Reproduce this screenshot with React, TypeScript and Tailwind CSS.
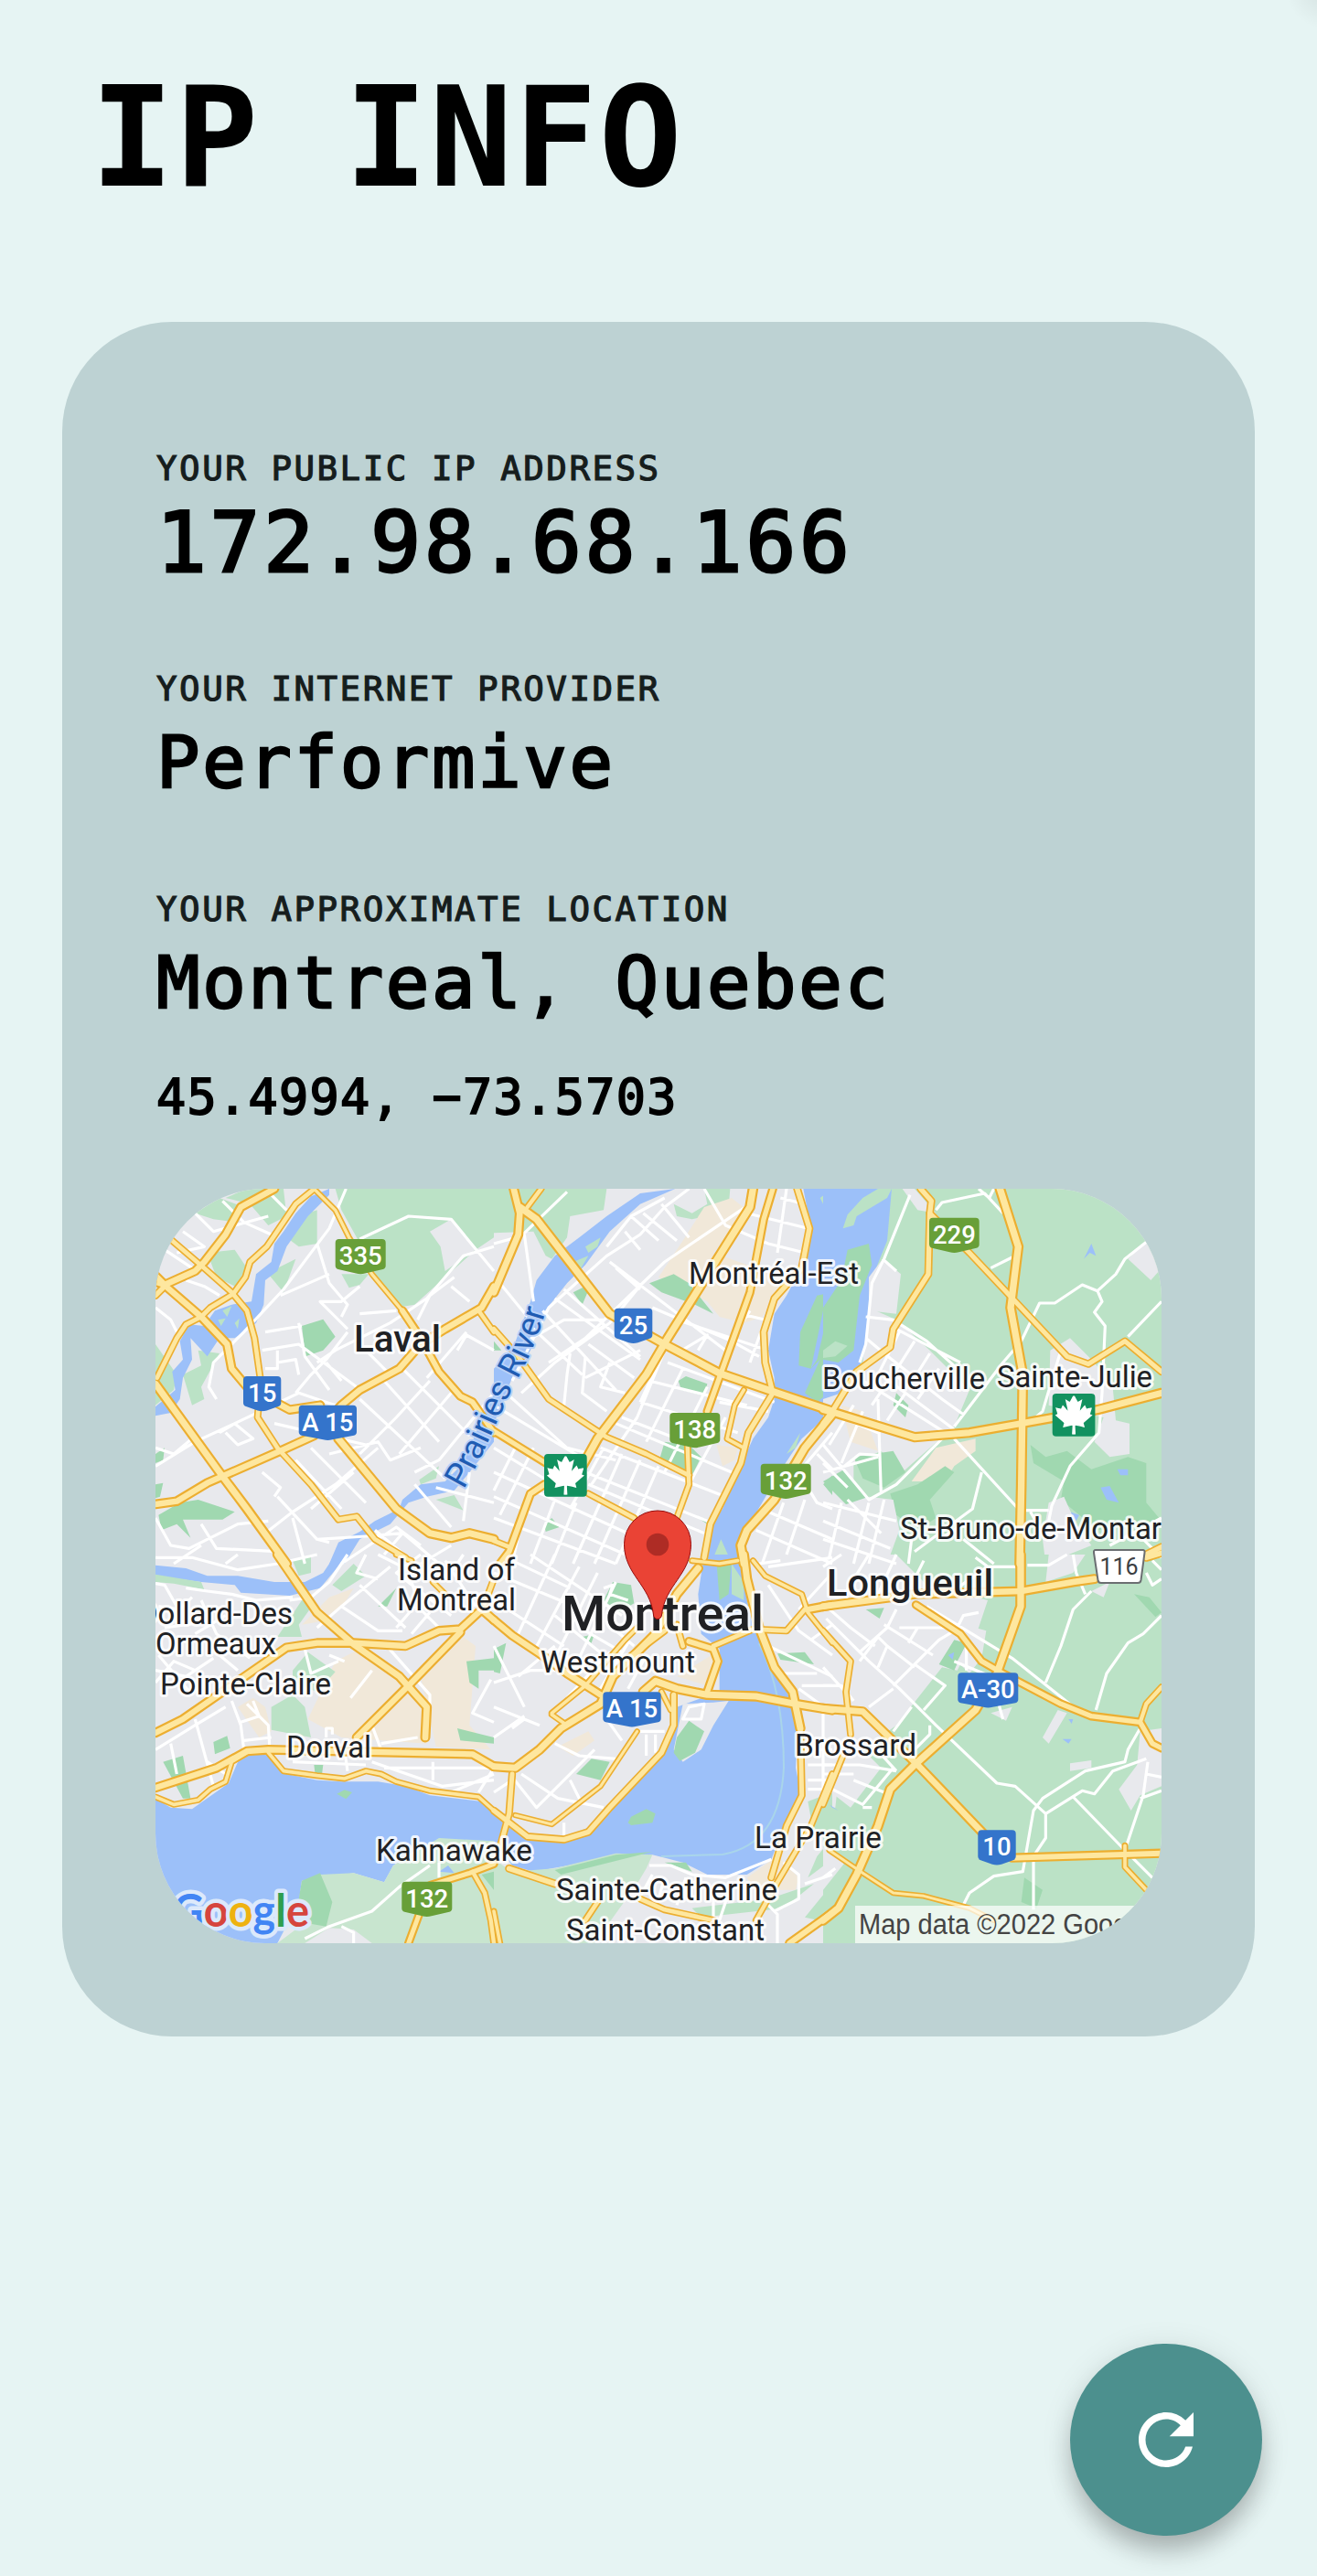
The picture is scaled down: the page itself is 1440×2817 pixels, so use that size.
import React from "react";
import { MdRefresh } from "react-icons/md";
import { FaCanadianMapleLeaf } from "react-icons/fa";

const LAND = "#e8e9ed";
const GREEN = "#bbe2c6";
const PALE = "#c8e5cf";
const DARK = "#a0d8b0";
const WATER = "#9cc0f9";
const SAND = "#f1e8d9";

type Sector = {
  x: number;
  y: number;
  areas: [string, string][];
  streets: string;
  roads: [number, string][];
};

/* Each sector is drawn at three times the map's scale. */
const sectors: Sector[] = [
  {
    x: 160,
    y: 1290,
    areas: [
      [GREEN, "M620 30H1140V190L1080 230L880 410L820 420L740 300L690 190L640 100Z"],
      [LAND, "M930 170L1000 130L1080 230L980 300L965 220Z"],
      [GREEN, "M640 310H730L700 345L665 355Z"],
      [GREEN, "M260 60L330 30H450L460 120L400 150L340 80Z"],
      [GREEN, "M160 110L240 60L320 90L300 140L220 130Z"],
      [GREEN, "M500 120L560 100V210L500 220L460 190Z"],
      [GREEN, "M200 240L290 230L330 290L290 350L230 320Z"],
      [GREEN, "M430 290L490 260L450 370L400 310Z"],
      [GREEN, "M30 540L100 640L90 690L30 740Z"],
      [GREEN, "M120 640L180 610L170 560L240 570L180 680L190 720L150 740Z"],
      [WATER, "M600 30L540 55L490 110L450 170L420 210L410 270L360 310L345 400L280 410L225 430L190 480L140 475L110 530L120 590L85 630L95 690L30 745V775L80 765L110 720L120 650L150 590L145 520L200 580L240 520L290 520L360 470L385 410L390 330L430 300L460 220L530 120L600 50Z"],
      [GREEN, "M250 430L280 415L265 450ZM235 460L260 455L245 480ZM290 470L305 455L300 490Z"],
      [DARK, "M510 480L580 458L620 515L580 560L522 580Z"],
      [DARK, "M40 1100L110 1060L170 1050L290 1090L250 1115L120 1115L145 1175L100 1130L50 1150Z"],
      [DARK, "M30 1000L55 995L45 1040L30 1045ZM30 900L60 880L55 920L30 930Z"],
      [WATER, "M1140 690L1040 930L980 990L900 1000L840 1050L830 1080L750 1120L700 1155L630 1190L600 1260H650L700 1180L800 1130L860 1060L920 1040L1010 1020L1060 960L1140 860Z"],
      [GREEN, "M895 985L960 940L950 980L900 1000ZM950 1050L1010 1035L1040 1085Z"],
    ],
    streets:
      "M655 30L600 160L570 200L450 360L320 500L220 600L205 680L230 720M700 195L860 120L1000 130L1140 300M1140 220L1040 250L920 390L800 470L620 560L560 600M440 380L600 310M560 210L600 340L660 410L640 450M700 350L640 400L570 400L620 450L660 490M500 470L520 580L600 690M390 500L510 480M380 560L500 540L690 680M30 940L160 860L290 800L500 700L620 740M590 600L640 660M660 500L590 590L540 640L490 700M700 720L980 980M780 660L960 860M840 620L1060 840M930 660L820 780L700 900M1000 700L830 900M1050 500L920 650M720 560L800 640M540 880L720 1060M490 920L640 1080M760 880L620 1000L480 1090L390 1160M680 960L540 1080M30 1110L80 1200L140 1210L300 1130L400 1120M180 1130L230 1210L430 1220M430 1040L560 1180L600 1190M1060 960L1040 1120M950 1010L1140 1060M880 1000L1000 1140M880 960L960 920L1140 700M250 70L320 140L410 180M160 110L220 170L400 120M120 170L190 220L100 240M60 230L150 290M410 50L460 100M30 420L80 460L100 500M130 330L190 350L240 380M430 560V620L390 620M430 600L490 590L500 640M30 880L90 900L150 850M240 830L290 800L350 850L300 870L260 830M420 800L720 870M600 900L760 860L800 920L900 880M380 960L440 1010L420 1040M480 1110L520 1260M300 1230L260 1260M90 1260L180 1200M560 1180L720 1170L840 1160L780 1230M1000 350L1060 400M890 460L930 380L1010 320M1140 560L1050 510L1020 560M700 440L820 430M640 1260L820 1140L900 1200M750 1150L880 1260M830 1150L960 1260M1000 1200L900 1260",
    roads: [
      [31, "M30 335L60 345L160 300L190 270L260 180L310 90L420 30"],
      [31, "M30 315L70 355L180 450L265 540L280 620L330 680L470 755L570 740"],
      [23, "M85 200L190 290L280 370L330 430L355 520L375 660L365 780L430 880L540 1000L630 1115L690 1105L750 1180L850 1240"],
      [23, "M545 35L490 80L395 220L340 270L325 320L285 375L210 420L180 450L130 475L100 520L35 650"],
      [25, "M30 380L60 350"],
      [33, "M30 670L240 960L330 1080L460 1260"],
      [31, "M30 1065L100 1055L200 995L440 890L550 840L640 740L700 690L830 620L900 540L980 490L1100 420L1140 350"],
      [19, "M550 30L620 100L665 190L740 310L840 430"],
      [29, "M840 430L900 520L960 630L1030 710L1070 730L1140 830"],
      [33, "M630 850L820 1080L930 1160L1000 1175L1060 1160L1140 1180"],
      [22, "M1090 430L1140 500"],
    ],
  },
  {
    x: 540,
    y: 1290,
    areas: [
      [GREEN, "M0 30H370L360 100L250 120L240 190L190 260L170 250L130 170L0 175Z"],
      [GREEN, "M690 30H775L770 90L740 110L650 130L600 120L590 80L650 110L700 80Z"],
      [SAND, "M690 90L780 60L830 100L720 240L860 290L960 330L900 420L880 450L820 470L740 450L700 400L540 320L620 200Z"],
      [SAND, "M730 870L800 880L790 920L750 940Z"],
      [DARK, "M510 340L590 310L640 340L720 440L660 410L550 370Z"],
      [WATER, "M595 30L480 45L370 120L280 190L200 250L140 330L120 400L60 560L0 620V800L60 650L120 560L160 440L240 340L300 280L380 170L480 80Z"],
      [GREEN, "M300 220L350 190L340 220L310 240ZM260 270L310 250L280 300Z"],
      [DARK, "M260 370L320 340L290 410ZM0 530L25 560L0 560Z"],
      [WATER, "M1015 30L1040 160L1030 250L960 380L920 440L900 560L920 650V720L900 780L850 850L800 960L750 1080L710 1140L700 1260H790L820 1160L880 1060L950 940L1010 850L1110 760V30Z"],
      [DARK, "M1060 380L1110 370V690L1060 730L1020 700L1070 590L1040 620L1000 610L1005 500Z"],
      [WATER, "M1080 430L1095 440L1060 590L1040 620Z"],
      [GREEN, "M1070 60L1110 30V110L1090 100ZM720 1240L745 1180L770 1235ZM960 900L1005 830L990 880Z"],
      [DARK, "M605 660L630 645L700 670L690 710L615 690ZM560 860L640 870L680 910L650 970L540 930ZM165 1130L190 1110L215 1140L170 1155ZM1080 1000L1110 970V1040ZM670 1110L690 1110L700 1130Z"],
    ],
    streets:
      "M0 210L90 185L240 40M100 180L130 400M20 340L110 450M60 660L180 420L370 250L480 180L560 90L640 30M370 220L450 120L560 60M380 270L760 560M160 430L400 690M230 360L480 580M200 390L480 590M450 120L540 200M490 110L600 200M550 80L640 190M300 520L560 270L840 80M690 30L760 150L900 210L1020 240M830 110L1030 160M600 460L900 560M470 360L380 470L200 600L90 700M250 570L240 640L230 740M360 480L180 600M570 600L920 730M510 660L830 740M480 730L800 830M400 800L780 960M350 880L760 1040M560 560L470 780L320 1000M620 620L500 860M700 680L560 960M760 780L640 1000M0 960L460 1170M0 1040L500 1260M0 1110L400 1260M300 960L700 1120M310 1000L690 1160M130 880L20 1100M80 860L0 1020M420 900L260 1260M480 920L330 1260M540 940L400 1260M360 880L250 1080M100 1080L60 1260M200 1050L120 1260M270 1060L190 1260M900 1090L1110 1180M860 1150L1110 1260M950 1060L880 1260M1110 830L1000 960L1060 1060L1110 1080M1060 900L1110 950M1020 1050L960 1230M40 700L240 880L400 920M0 740L300 920M400 290L480 360M430 170L480 230M520 420L780 530L870 580M810 440L890 460L840 600M780 520L840 430M310 540L460 650M300 580L290 700L370 760M380 600L350 680L430 700M300 650L480 560M940 60L1020 80M960 30L930 240M600 570L700 510L670 560M540 600L480 730M660 780L620 860M740 730L900 760M90 540L230 460L360 460M120 480L290 640M0 880L180 990M420 780L600 850M60 900L10 1000",
    roads: [
      [22, "M155 30L110 90"],
      [32, "M65 30L85 110L80 180L0 370"],
      [34, "M85 90L140 130L380 440L560 540L740 635L900 690L1110 760"],
      [34, "M850 30L840 90L570 520L500 640L340 850L290 940"],
      [28, "M915 30L885 130L840 370L700 760"],
      [25, "M995 30L1035 160L1010 290L920 390L885 500L890 600L915 700L835 830L810 930L750 1050L710 1130L690 1240"],
      [20, "M820 690L790 740L765 850L820 880"],
      [23, "M0 490L80 580L180 720L370 845L500 900L640 970"],
      [27, "M0 825L170 930"],
      [29, "M165 1000L120 1030L50 1220L20 1260"],
      [23, "M0 1185L50 1205"],
      [22, "M635 870L640 1000L600 1110"],
      [22, "M310 1030L460 1110"],
      [34, "M1110 770L1020 880L920 1050L830 1150L810 1200L820 1260"],
    ],
  },
  {
    x: 900,
    y: 1290,
    areas: [
      [GREEN, "M30 30H1110V1260H100V700Z"],
      [WATER, "M0 30H225L210 200L170 300L150 400L140 560L120 610L60 700L30 750H0Z"],
      [DARK, "M80 230L150 210L160 280L120 380L100 560L50 600L0 590V420L60 330Z"],
      [GREEN, "M65 160L80 115L130 60L180 30H225L210 60L110 120L100 150ZM0 560L40 530L80 545L40 580L0 585Z"],
      [LAND, "M150 420L240 460L350 560L480 690L430 810L260 960L190 890L60 950L0 990V720L60 700L130 600Z"],
      [LAND, "M150 320L195 260L255 310L240 440L150 430ZM260 30H300L370 110L310 100Z"],
      [SAND, "M290 990L370 880L500 850V890L430 940L400 990ZM60 740L130 760L180 890L90 860Z"],
      [DARK, "M220 1030L310 1000L400 940L430 960L350 1050L370 1110L310 1150L240 1100ZM0 990L70 950L150 1050L80 1070ZM100 910L230 890L270 960L200 1010L130 980ZM240 700L280 740L270 780L230 740Z"],
      [LAND, "M0 1000L60 1070L150 1040L230 1050L250 1150L210 1260H0Z"],
      [LAND, "M745 560L810 520L890 600L950 680L960 790L1005 800V900L940 910L890 860L920 780L740 740Z"],
      [LAND, "M1000 260L1060 200L1110 290L1075 330Z"],
      [DARK, "M680 870L730 910L800 890L880 950L1000 910L1060 930V1060L1110 1120L900 1150L780 1050L790 990L690 930Z"],
      [WATER, "M910 1010L940 1005L970 1060L930 1050ZM965 950H1000V970H975ZM855 260L880 210L895 250L875 240ZM810 1090L840 1100L830 1120Z"],
      [LAND, "M740 1060L790 1040L830 1130L880 1200L730 1260L720 1180Z"],
    ],
    streets:
      "M285 50L200 260L160 340L140 540L120 600M370 100L390 75L530 45L590 110M510 30L545 60L560 30M195 260L240 300M140 450L230 460L340 530L440 620M550 290L620 255M1060 205L990 260L960 310L900 365L850 345L760 405L710 405L650 530L590 600L430 810M900 365L915 400L890 435L925 480L915 700L905 830L810 940L750 1070L740 1120M1110 400L1000 515M420 820L240 1000L150 1050L0 870M430 850L640 1080M520 960L490 1080L300 1220M180 720L190 1030M190 640L430 820M100 640L400 830M250 500L160 680M300 530L230 640L330 700M350 570L300 650M60 780L180 830M100 740L20 870M130 760L60 930M150 1060L100 1260M0 1060L240 1120M0 1120L220 1210M200 1050L150 1260M60 1060L20 1240M640 1085H740M460 1180L560 1260M290 1180L280 1260M780 560L720 760L650 820M240 490L450 600M200 570L390 720L460 770M140 520L200 570M220 650L160 740M270 700L210 790M380 620L310 720M0 930L80 1010M0 960L180 910M70 940L120 900L190 905M0 1180L240 1260M80 1050L190 1160M680 1090L720 1160M1110 1110L940 1200M1110 1240L1040 1170M480 1120L380 1180",
    roads: [
      [25, "M320 30L355 70L350 110L345 310L230 490L220 550L110 630L30 760L0 800"],
      [24, "M350 110L480 240L800 580L870 605L990 530L1110 630"],
      [34, "M580 30L640 220L615 420L655 640L650 1000L645 1260"],
      [33, "M0 755L40 765L300 845L480 830L650 800L900 755L1110 700"],
      [26, "M1040 1240L1110 1205"],
    ],
  },
  {
    x: 160,
    y: 1700,
    areas: [
      [WATER, "M30 35L130 45L200 70L300 70L420 90L520 90L580 60L620 0H660L620 50L570 110L470 135L310 125L290 100L180 90L30 70Z"],
      [GREEN, "M30 65L180 90L190 115L90 95L30 90ZM480 20L540 0V60L500 70ZM610 100L680 30L720 70L640 120ZM510 150L550 160L500 230L510 270L430 270Z"],
      [SAND, "M620 350L700 310L860 420L940 500L920 620L640 600L530 540ZM900 400L1040 270L1080 300L1060 560L1130 640L950 630ZM510 230L600 140L680 110L650 160L570 220Z"],
      [SAND, "M300 500L350 470L390 500L410 580L370 600Z"],
      [GREEN, "M410 500L480 460L520 500L540 600L410 575ZM480 380L530 320L620 385L560 450L480 420Z"],
      [DARK, "M1050 350L1140 340V380L1090 380L1090 440L1060 420ZM1020 570L1140 600V620L1030 610ZM220 615L265 595L275 635L225 655ZM55 680L120 660L145 800H120ZM550 690L580 690L575 730L555 730ZM760 170L820 110L790 170Z"],
      [WATER, "M30 800L80 830L150 835L270 750L300 680L350 650L410 660L460 720L560 740L640 745L760 745L850 760L930 790L1100 810L1140 830V960H900L810 1020L780 1075L680 1045L580 1060L510 1070L500 1140L430 1275H30Z"],
      [PALE, "M1140 940L960 930L810 1020L780 1075L680 1045L570 1050L510 1090L530 1200L430 1275H1140Z"],
      [DARK, "M570 1045L610 1140L590 1220L530 1210L500 1130L510 1070ZM625 785L650 772L675 780L655 802ZM1100 1050L1140 1040V1100Z"],
      [LAND, "M520 1275L600 1225L680 1230L740 1275Z"],
      [WATER, "M960 1040L990 1020L1010 1045Z"],
    ],
    streets:
      "M30 10L150 10L300 50L430 30L560 0M30 95L60 100L100 170M130 110L200 120L280 130L360 150L480 140M660 0L600 90L540 140L470 150M800 40L640 170L760 250L840 250M640 170L560 240M700 100L850 240M860 60L900 180L960 240M30 640L160 560L260 500M160 540L220 760M280 480L310 560L320 640M330 490L400 560L405 640M310 550L370 530L350 480M80 620L100 720M520 310L540 390L630 350M600 330L650 350M670 470L740 380M780 290L930 460L930 500M650 640L660 710M740 680L970 760L1140 740M780 700H1140M940 680V740M520 1260L600 1220L740 1170L830 1090L930 1020M640 1220L680 1240V1275M960 1060V1010M1140 550L1070 520L1130 410M590 600V570H610V590M30 380L130 400L220 340M30 420L90 350L160 380M180 150L230 260L340 340M40 330L150 460M240 330L300 380M320 610L410 600M40 170L110 180L150 140M160 260L260 200M60 240L200 220M720 0L690 60L760 80M760 0L900 70M900 0L820 60L1000 200M980 20L1080 170M1040 0L1000 60M880 170L820 240M930 190L870 260M740 560L770 640M770 620L890 600M1000 780L1140 720M1090 780L1140 700M200 680L260 720M480 680L720 690",
    roads: [
      [32, "M430 0L560 190L680 295L830 400L920 500L915 600"],
      [31, "M30 585L120 540L460 305L560 290L680 290L850 300L960 250L1030 245L1100 180L1140 215"],
      [31, "M1030 255L860 430L690 600"],
      [31, "M30 765L230 700L330 645L400 640L1070 655L1140 695"],
      [20, "M30 795L90 820L170 805L210 770L260 745L280 680L330 650"],
      [20, "M400 650L450 710L560 725L650 735L720 710L770 720L820 745L930 775L1090 795L1140 840"],
      [27, "M1140 1015L1060 1045L930 1085L860 1275"],
      [22, "M1070 1040L1110 1110L1130 1200L1140 1275"],
      [23, "M1140 80L1110 160"],
      [20, "M820 0L870 20M940 90L980 130"],
    ],
  },
  {
    x: 540,
    y: 1700,
    areas: [
      [WATER, "M690 0H800L820 100L850 240L880 280L970 470L1000 500L990 700L1010 800L950 900L910 1000L830 1050L700 1050L620 1010L520 985L300 1010L130 1040L60 1020L0 940V840L60 900L110 930L240 930L340 880L550 650L600 500L740 450V310L680 260L670 130Z"],
      [SAND, "M600 400L730 320L700 430ZM210 630L310 580L330 610L260 660ZM830 1060L930 990L1000 1060L990 1100L920 1100L880 1150Z"],
      [PALE, "M0 1000L60 1040L200 1030L400 980L520 985L500 1030L470 1080L330 1275H0Z"],
      [DARK, "M200 1035L400 985L520 975L400 1005L220 1050ZM560 1010L630 1010L650 1040Z"],
      [LAND, "M590 640L620 490L720 485L770 480L720 560L680 640L620 680Z"],
      [DARK, "M590 650L600 600L640 545L690 580L660 650L610 677ZM440 880L450 860L500 835L530 850L520 880L450 888ZM730 20H780L770 130L740 150ZM360 150L390 90L450 100L460 160L410 190ZM270 720L320 670L380 680L350 740ZM290 270L330 260L320 290ZM0 310L40 290L20 390L0 385ZM930 325L1020 320L1050 360L940 345Z"],
      [GREEN, "M1030 810L1110 780V900L1050 920ZM1030 1060L1060 990L1110 930V1000ZM1020 1190L1110 1080V1210ZM650 1160L900 1130L1050 1080L950 1160L680 1190ZM780 30L820 90V150L780 130Z"],
    ],
    streets:
      "M0 300L100 500M0 420L120 380L230 380M0 500L150 560M80 400L200 300M100 540L60 570M60 730L140 830L330 640M90 720L210 800L360 830M250 740L290 820M200 620L280 660L400 670M230 880V930M370 540L420 610M480 580H560M500 590V660M530 590V650M900 300L1110 400M920 390H1060M1000 440L1110 520M1030 770H1110M1030 740H1110M1080 520V780M0 60L240 160M60 20L250 110M0 150L230 300M120 0L420 200M200 0L80 260M280 40L130 320M340 60L200 340M400 90L260 380M520 1050L470 1140M510 1020H580L650 1050L760 1060L910 1000M780 1080L740 1200M720 1090V1200M880 1130L930 1180V1275M950 1010L1000 1050V1130L920 1170M900 40L1110 10M900 100L1000 250L1110 330M360 110L390 100L380 130L440 150M440 290L350 440M500 330L440 440M380 320L240 470M0 600L100 530M0 780L60 740M620 540L640 500L690 490L680 540H630ZM1110 60L1000 180M1040 280L1110 230M940 20L870 30M1010 430H1110M1020 640H1110M1030 690H1110M560 1060L540 1130M630 1060L600 1150M1110 1050L1020 1080M400 250L460 300M300 250L420 320M200 200L360 330",
    roads: [
      [20, "M190 520L300 430L430 280L470 240M240 560L190 525"],
      [20, "M650 20L740 30L800 20"],
      [20, "M850 20L890 70L1010 130L1030 190L1110 290"],
      [23, "M600 230L620 300M720 300L850 245L960 250L1020 180"],
      [31, "M1030 180L1110 165"],
      [31, "M0 215L60 265L150 325L240 390L350 460"],
      [33, "M0 695L70 700L150 640L220 570L350 490L390 400L530 260L600 130L670 45"],
      [24, "M440 340L560 250"],
      [33, "M490 450L530 415L600 440L700 460L860 465L990 490L1110 510"],
      [25, "M590 460L590 560L550 650L380 830L310 910L230 935L110 925L0 840"],
      [18, "M470 580L350 760L190 885L70 855"],
      [24, "M60 720L50 850L20 960"],
      [33, "M820 0L830 80L870 240L920 370L980 450L1005 570"],
      [24, "M1005 560L1010 790L960 890L910 1060"],
      [29, "M640 285L720 310L735 350L700 450"],
      [22, "M1110 720L1040 890L930 1075L860 1200"],
      [26, "M50 1030L200 1080"],
      [23, "M480 1130L560 1165L720 1200M340 1140L300 1200"],
      [30, "M1110 1175L970 1275"],
      [20, "M550 450L580 510M0 1170L20 1275"],
    ],
  },
  {
    x: 900,
    y: 1700,
    areas: [
      [GREEN, "M130 0H1110V1275H0V830H40Z"],
      [LAND, "M0 0H240L340 100L540 150L510 240L440 380L390 370L240 560L130 640L190 700L90 830L0 760Z"],
      [DARK, "M380 360L430 280L470 290L430 380ZM140 180L200 175L185 210ZM1020 130L1070 140L1110 190L1090 205ZM660 1060L720 1100L700 1160L650 1140Z"],
      [WATER, "M410 330L430 320L425 345ZM785 605L815 605L805 620ZM805 540L820 540L815 555ZM20 820L50 840L30 830Z"],
      [LAND, "M440 350L500 240L535 250L520 340L480 390ZM720 600L770 510L800 520L740 620ZM550 520L620 500L600 545ZM810 685L880 675V700L810 710ZM1040 580L1110 570V760L1040 790L1010 840L970 770L1030 690ZM740 0H860L820 60L730 90ZM880 120L940 90L920 140ZM0 960L80 1000L0 1100Z"],
    ],
    streets:
      "M10 210L150 350L250 440L370 560L570 750L630 760L730 850M1040 570L1000 640L990 680L860 710L720 800L690 840L655 1040L560 1055L480 1110L460 1150M1060 670L950 710L890 785L850 775L730 850V930L690 990V1165M820 795L980 960L1080 1060M1110 200L1050 260L1000 290L930 390L895 510M880 120L820 180L780 300L730 420M340 170L620 340L815 495M1065 680L1050 790L990 970M1110 775L1040 800M670 35H740L800 0M820 0L830 60L860 130M500 10L540 40H640M200 230L360 330M120 320L210 240L240 180M230 430L380 280L430 250M150 500L230 440M300 360L400 430L330 510M210 300L300 370M120 350L180 270L210 300L180 370M250 240L440 240L460 200L510 190M0 430H60L100 480M0 690H120L240 710M30 770L130 820L230 700M100 740L200 780M140 600L240 710M350 560V590L300 640M230 580L290 500M0 370L100 480M280 290L310 240M430 350L550 400L590 540M470 300V380M170 300L90 240L10 170M0 720H100M1060 60L1080 100L1110 80M1080 20L1110 50M0 1060L40 1030M1060 720L1110 730M0 40L60 0M150 0L70 130M240 0L180 130M330 20L280 120M540 40L440 110M160 830L130 830",
    roads: [
      [18, "M20 970L130 1045L230 1110L330 1120L480 1160L560 1200"],
      [22, "M0 250L90 350L75 450L90 590M65 660L0 820"],
      [32, "M0 170L300 130L650 120L820 90L890 80"],
      [26, "M1060 10L1110 -5"],
      [34, "M648 0V170L570 390L500 510L300 690L220 770L180 890L110 1050L50 1160L0 1200"],
      [28, "M305 165L450 260L520 350L590 390L780 490L880 530L1040 550L1080 620L1110 635"],
      [22, "M1110 435L1060 490L1040 550"],
      [32, "M0 505L130 515L310 690L530 920"],
      [30, "M620 995L1110 980"],
      [20, "M990 955V1025L1060 1100"],
    ],
  },
];

const places: [string, number, number, number, number, number][] = [
  ["Laval", 387, 1478, 95, 41, 500],
  ["Montréal-Est", 753, 1404, 186, 33, 400],
  ["Boucherville", 899, 1519, 178, 33, 400],
  ["Sainte-Julie", 1090, 1517, 170, 33, 400],
  ["St-Bruno-de-Montar", 984, 1683, 286, 33, 400],
  ["Island of", 435, 1728, 128, 33, 400],
  ["Montreal", 434, 1761, 130, 33, 400],
  ["Dollard-Des", 151, 1776, 169, 33, 400],
  ["Ormeaux", 170, 1809, 132, 33, 400],
  ["Pointe-Claire", 175, 1853, 187, 33, 400],
  ["Dorval", 313, 1922, 93, 33, 400],
  ["Kahnawake", 411, 2035, 171, 33, 400],
  ["Westmount", 591, 1829, 169, 33, 400],
  ["Brossard", 869, 1920, 133, 33, 400],
  ["La Prairie", 825, 2021, 139, 33, 400],
  ["Sainte-Catherine", 608, 2078, 242, 33, 400],
  ["Saint-Constant", 619, 2122, 217, 33, 400],
  ["Longueuil", 904, 1745, 182, 41, 500],
  ["Montreal", 614, 1783, 221, 54, 500],
];

const GR = "#689f38";
const BL = "#3474cb";
const shields: [string, number, number, number, string][] = [
  ["335", 366.7, 1355, 55, GR],
  ["15", 266, 1505, 41.3, BL],
  ["A 15", 326.7, 1536.7, 63.3, BL],
  ["25", 671.7, 1430.7, 41.6, BL],
  ["138", 732.3, 1545, 55, GR],
  ["132", 831.7, 1600.7, 55, GR],
  ["229", 1016, 1331.7, 54.7, GR],
  ["132", 439.3, 2057.7, 55, GR],
  ["A 15", 659.3, 1850.3, 63.4, BL],
  ["A-30", 1047.3, 1829.3, 66, BL],
  ["10", 1069.3, 2001.3, 41.4, BL],
];

function Shield({ label, x, y, w, fill }: { label: string; x: number; y: number; w: number; fill: string }) {
  const d = `M4 0H${w - 4}Q${w} 0 ${w} 4V29Q${w} 32 ${w - 3} 33L${w / 2 + 5} 37.5Q${w / 2} 39 ${w / 2 - 5} 37.5L3 33Q0 32 0 29V4Q0 0 4 0Z`;
  return (
    <g transform={`translate(${x} ${y})`}>
      <path d={d} fill={fill} />
      <text x={w / 2} y={28} textAnchor="middle" fontSize={27.5} fontWeight={500} fill="#fff">
        {label}
      </text>
    </g>
  );
}

function Leaf({ x, y }: { x: number; y: number }) {
  return (
    <g>
      <rect x={x} y={y} width={46.7} height={46.7} rx={4} fill="#12915f" />
      <FaCanadianMapleLeaf x={x + 2.4} y={y + 2.4} size={42} color="#fff" stroke="#fff" strokeWidth={18} />
    </g>
  );
}

const google: [string, string][] = [
  ["G", "#4285f4"],
  ["o", "#d6453d"],
  ["o", "#eeb211"],
  ["g", "#4285f4"],
  ["l", "#2f9e4f"],
  ["e", "#d6453d"],
];

function MontrealMap() {
  return (
    <svg viewBox="170 1300 1100 825" className="block h-full w-full" fontFamily="Roboto, sans-serif">
      <rect x={170} y={1300} width={1100} height={825} fill={LAND} />
      {sectors.map((s, i) => (
        <g key={i} transform={`translate(${s.x} ${s.y}) scale(.33333)`}>
          {s.areas.map(([fill, d], j) => (
            <path key={j} d={d} fill={fill} />
          ))}
        </g>
      ))}
      {sectors.map((s, i) => (
        <g key={i} transform={`translate(${s.x} ${s.y}) scale(.33333)`} fill="none" stroke="#fff" strokeWidth={9.5} strokeLinejoin="round">
          <path d={s.streets} />
        </g>
      ))}
      <path d="M830 1797Q857 1850 857 1933Q853 2017 790 2028L723 2030" fill="none" stroke="#a9d5ea" strokeWidth={2} />
      {sectors.map((s, i) => (
        <g key={i} transform={`translate(${s.x} ${s.y}) scale(.33333)`} fill="none" stroke="#ecae30" strokeLinejoin="round" strokeLinecap="round">
          {s.roads.map(([w, d], j) => (
            <path key={j} d={d} strokeWidth={w + 1} />
          ))}
        </g>
      ))}
      {sectors.map((s, i) => (
        <g key={i} transform={`translate(${s.x} ${s.y}) scale(.33333)`} fill="none" stroke="#fee79f" strokeLinejoin="round" strokeLinecap="round">
          {s.roads.map(([w, d], j) => (
            <path key={j} d={d} strokeWidth={w > 26 ? w - 12 : w - 9} />
          ))}
        </g>
      ))}

      <path id="river" d="M507 1629C525 1599 540 1562 557 1525C572 1497 585 1475 598 1430" fill="none" />
      <text fontSize={37} fill="#1f5cb3" stroke="#b7d1f8" strokeWidth={4} strokeLinejoin="round" className="[paint-order:stroke]">
        <textPath href="#river" textLength={216} lengthAdjust="spacingAndGlyphs">
          Prairies River
        </textPath>
      </text>

      {shields.map(([label, x, y, w, fill], i) => (
        <Shield key={i} label={label} x={x} y={y} w={w} fill={fill} />
      ))}
      <Leaf x={595} y={1590} />
      <Leaf x={1150.7} y={1524} />
      <path d="M1198 1695H1249.500Q1252 1695 1251.500 1698L1247.500 1728Q1247 1731 1244 1731H1204Q1201 1731 1200.500 1728L1196 1698Q1195.500 1695 1198 1695Z" fill="#fff" stroke="#6b6e72" strokeWidth={2} />
      <text x={1223.500} y={1721.500} textAnchor="middle" fontSize={25} fill="#3c4043">
        116
      </text>

      {places.map(([name, x, y, w, size, weight], i) => (
        <text
          key={i}
          x={x}
          y={y}
          textLength={w}
          lengthAdjust="spacingAndGlyphs"
          fontSize={size}
          fontWeight={weight}
          fill="#202124"
          stroke="#fff"
          strokeOpacity={0.85}
          strokeWidth={6}
          strokeLinejoin="round"
          className="[paint-order:stroke]"
        >
          {name}
        </text>
      ))}

      <path
        d="M719 1652A36.500 36.500 0 0 0 682.500 1688.500C682.500 1722 711 1733 714.500 1766A4.500 4.500 0 0 0 723.500 1766C727 1733 755.500 1722 755.500 1688.500A36.500 36.500 0 0 0 719 1652Z"
        fill="#ea4335"
        stroke="#960a0a"
        strokeWidth={1}
      />
      <circle cx={719} cy={1689} r={12.300} fill="#ae2c25" />

      <text x={189} y={2107} textLength={149} lengthAdjust="spacingAndGlyphs" fontSize={49} fontWeight={700} fontFamily="Lato, sans-serif" stroke="#dce9fb" strokeWidth={9} strokeLinejoin="round" className="[paint-order:stroke]">
        {google.map(([ch, fill], i) => (
          <tspan key={i} fill={fill}>
            {ch}
          </tspan>
        ))}
      </text>

      <rect x={935} y={2084} width={335} height={41} fill="#fff" fillOpacity={0.7} />
      <text x={939} y={2115} fontSize={31} textLength={317} lengthAdjust="spacingAndGlyphs" fontFamily="Liberation Sans, Arial, sans-serif" fill="#444">
        Map data ©2022 Google
      </text>
    </svg>
  );
}

function Label({ children }: { children: React.ReactNode }) {
  return (
    <p className="text-[37.5px] leading-[48px] tracking-[2.5px] whitespace-nowrap text-[#161d1d] [-webkit-text-stroke:1.2px_#161d1d]">
      {children}
    </p>
  );
}

function Value({ children }: { children: React.ReactNode }) {
  return (
    <p className="mt-[9px] text-[79px] leading-[96px] tracking-[2.6px] whitespace-nowrap [-webkit-text-stroke:2.4px_#000]">
      {children}
    </p>
  );
}

export default function App() {
  return (
    <main className="flex min-h-[2817px] w-[1440px] flex-col overflow-hidden bg-[#e6f4f3] bg-[radial-gradient(circle_at_1450px_-12px,rgba(0,0,0,0.08),transparent_44px)] bg-no-repeat pt-[63px] font-['DejaVu_Sans_Mono',monospace] text-black">
      <h1 className="ml-[99px] text-[151px] leading-[176px] font-bold tracking-[1.7px] whitespace-nowrap">IP INFO</h1>

      <section className="mx-[68px] mt-[113px] flex h-[1875px] flex-col rounded-[120px] bg-[#bdd2d3] pr-[102px] pl-[103px] pt-[136px]">
        <Label>YOUR PUBLIC IP ADDRESS</Label>
        <p className="mt-[2.5px] text-[91px] leading-[110px] tracking-[3.8px] whitespace-nowrap [-webkit-text-stroke:3px_#000]">
          172.98.68.166
        </p>

        <div className="mt-[80.5px]">
          <Label>YOUR INTERNET PROVIDER</Label>
          <Value>Performive</Value>
        </div>

        <div className="mt-[88px]">
          <Label>YOUR APPROXIMATE LOCATION</Label>
          <Value>Montreal, Quebec</Value>
        </div>

        <p className="mt-[44.8px] text-[53.5px] leading-[64px] tracking-[1.3px] whitespace-nowrap [-webkit-text-stroke:1.8px_#000]">
          45.4994, −73.5703
        </p>

        <div className="mt-[68.2px] -ml-px h-[825px] w-[1100px] shrink-0 overflow-hidden rounded-[120px]">
          <MontrealMap />
        </div>
      </section>

      <button
        aria-label="Refresh"
        className="mt-[336px] mr-[60px] flex size-[210px] items-center justify-center self-end rounded-full bg-[#4c908e] text-white shadow-[0_20px_28px_-4px_rgba(0,0,0,0.24),0_4px_34px_rgba(0,0,0,0.1)]"
      >
        <MdRefresh size={90} />
      </button>
    </main>
  );
}
